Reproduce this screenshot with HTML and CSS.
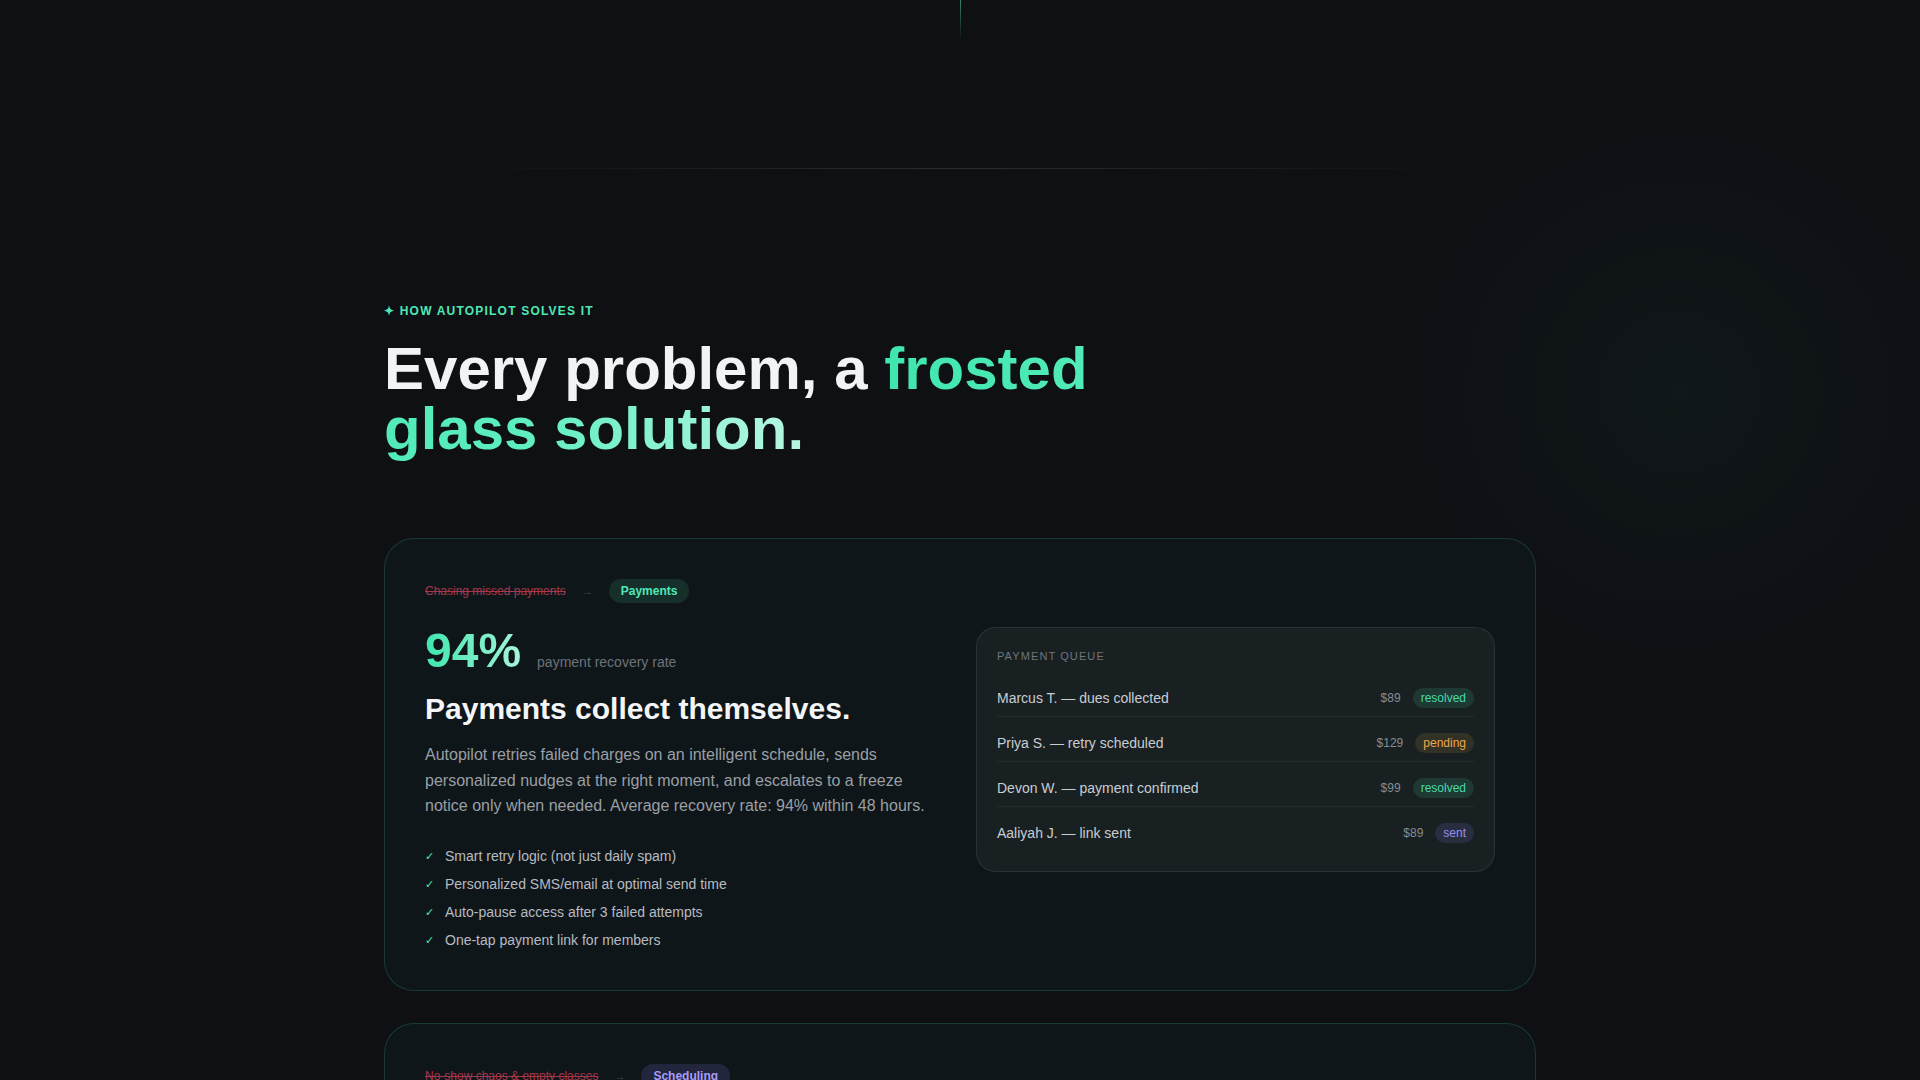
FILE: index.html
```html
<!DOCTYPE html>
<html lang="en">
<head>
  <meta charset="UTF-8">
  <title>Autopilot — How it solves it</title>
  <link rel="stylesheet" href="styles.css">
</head>
<body>
  <div class="top-line"></div>
  <div class="divider"></div>

  <section class="solutions">
    <p class="eyebrow">✦ How Autopilot solves it</p>
    <h2>Every problem, a <span class="accent">frosted glass solution.</span></h2>

    <div class="cards">
      <!-- Payments -->
      <article class="card">
        <div class="tags">
          <span class="before">Chasing missed payments</span>
          <span class="arrow">→</span>
          <span class="pill pill-green">Payments</span>
        </div>
        <div class="card-grid">
          <div class="copy">
            <div class="stat">
              <span class="stat-num">94%</span>
              <span class="stat-label">payment recovery rate</span>
            </div>
            <h3>Payments collect themselves.</h3>
            <p>Autopilot retries failed charges on an intelligent schedule, sends personalized nudges at the right moment, and escalates to a freeze notice only when needed. Average recovery rate: 94% within 48 hours.</p>
            <ul class="checks">
              <li>Smart retry logic (not just daily spam)</li>
              <li>Personalized SMS/email at optimal send time</li>
              <li>Auto-pause access after 3 failed attempts</li>
              <li>One-tap payment link for members</li>
            </ul>
          </div>
          <div class="panel">
            <div class="panel-title">Payment Queue</div>
            <div class="rows">
              <div class="row">
                <span class="row-name">Marcus T. — dues collected</span>
                <span class="row-amount">$89</span>
                <span class="status status-resolved">resolved</span>
              </div>
              <div class="row">
                <span class="row-name">Priya S. — retry scheduled</span>
                <span class="row-amount">$129</span>
                <span class="status status-pending">pending</span>
              </div>
              <div class="row">
                <span class="row-name">Devon W. — payment confirmed</span>
                <span class="row-amount">$99</span>
                <span class="status status-resolved">resolved</span>
              </div>
              <div class="row">
                <span class="row-name">Aaliyah J. — link sent</span>
                <span class="row-amount">$89</span>
                <span class="status status-sent">sent</span>
              </div>
            </div>
          </div>
        </div>
      </article>

      <!-- Scheduling -->
      <article class="card">
        <div class="tags">
          <span class="before">No-show chaos &amp; empty classes</span>
          <span class="arrow">→</span>
          <span class="pill pill-purple">Scheduling</span>
        </div>
        <div class="card-grid">
          <div class="copy">
            <div class="stat">
              <span class="stat-num">-61%</span>
              <span class="stat-label">fewer no-shows</span>
            </div>
            <h3>Classes fill themselves.</h3>
            <p>Autopilot sends smart reminders, opens waitlist spots the moment someone cancels, and nudges lapsed members back onto the schedule.</p>
            <ul class="checks">
              <li>Reminders 24h and 2h before class</li>
              <li>Automatic waitlist promotion</li>
              <li>Late-cancel policy enforced for you</li>
            </ul>
          </div>
          <div class="panel">
            <div class="panel-title">Today's Classes</div>
            <div class="rows">
              <div class="row">
                <span class="row-name">6:00 AM — Strength</span>
                <span class="row-amount">18/20</span>
                <span class="status status-resolved">filled</span>
              </div>
              <div class="row">
                <span class="row-name">12:00 PM — HIIT</span>
                <span class="row-amount">14/20</span>
                <span class="status status-pending">waitlist</span>
              </div>
            </div>
          </div>
        </div>
      </article>
    </div>
  </section>
</body>
</html>
```

FILE: styles.css
```css
body {
  margin: 0;
  font-family: 'Liberation Sans', Arial, sans-serif;
  color: #e8eaed;
  background:
    radial-gradient(circle 270px at 1678px 392px, rgba(78, 232, 181, 0.035), rgba(78, 232, 181, 0) 100%),
    #0e1014;
  min-height: 100vh;
}

/* Leftovers from the section above */
.top-line {
  width: 1px;
  height: 40px;
  margin: 0 auto;
  background: linear-gradient(180deg, rgba(78, 232, 181, 0.55), rgba(78, 232, 181, 0));
}

.divider {
  width: 1000px;
  height: 1px;
  margin: 128px auto 0;
  background: linear-gradient(90deg, rgba(255,255,255,0), rgba(255,255,255,0.12) 50%, rgba(255,255,255,0));
}

.solutions {
  max-width: 1152px;
  margin: 0 auto;
  padding: 134px 0 80px;
}

.eyebrow {
  margin: 0;
  font-size: 12px;
  line-height: 16px;
  font-weight: 700;
  letter-spacing: 0.1em;
  text-transform: uppercase;
  color: #4ee8b5;
}

.solutions h2 {
  margin: 20px 0 0;
  font-size: 60px;
  line-height: 60px;
  font-weight: 700;
  color: #f2f3f5;
  max-width: 760px;
}

.accent {
  background: linear-gradient(90deg, #3fe6ad 0%, #5eeebf 55%, #b8f7e2 100%);
  -webkit-background-clip: text;
  background-clip: text;
  color: transparent;
}

/* Cards */
.cards {
  margin-top: 79px;
  display: flex;
  flex-direction: column;
  gap: 32px;
}

.card {
  padding: 40px;
  border: 1px solid rgba(78, 232, 181, 0.17);
  border-radius: 30px;
  background: #0f1619;
}

.tags {
  display: flex;
  align-items: center;
  gap: 16px;
  margin-bottom: 24px;
  height: 24px;
}

.before {
  font-size: 12px;
  color: #a8364b;
  text-decoration: line-through;
}

.arrow {
  font-size: 11px;
  color: #3b424a;
}

.pill {
  padding: 5px 12px;
  border-radius: 999px;
  font-size: 12px;
  line-height: 14px;
  font-weight: 700;
}

.pill-green {
  background: rgba(78, 232, 181, 0.12);
  color: #4ee8b5;
}

.pill-purple {
  background: rgba(139, 124, 246, 0.16);
  color: #a99cf8;
}

.card-grid {
  display: grid;
  grid-template-columns: 1fr 1fr;
  gap: 32px;
  align-items: start;
}

.stat {
  display: flex;
  align-items: baseline;
  gap: 16px;
}

.stat-num {
  font-size: 48px;
  line-height: 48px;
  font-weight: 700;
  background: linear-gradient(90deg, #3fe6ad, #a5f5da);
  -webkit-background-clip: text;
  background-clip: text;
  color: transparent;
}

.stat-label {
  font-size: 14px;
  color: #6c7279;
}

.copy h3 {
  margin: 16px 0 0;
  font-size: 30px;
  line-height: 36px;
  font-weight: 700;
  color: #f4f5f7;
}

.copy p {
  margin: 15px 0 0;
  font-size: 16px;
  line-height: 1.6;
  color: #9a9fa6;
}

.checks {
  list-style: none;
  margin: 27px 0 0;
  padding: 0;
  display: flex;
  flex-direction: column;
  gap: 8px;
}

.checks li {
  display: flex;
  align-items: center;
  height: 20px;
  font-size: 14px;
  color: #b7bbc1;
}

.checks li::before {
  content: "✓";
  width: 20px;
  flex-shrink: 0;
  font-size: 11px;
  line-height: 20px;
  color: #4ee8b5;
}

/* Queue panel */
.panel {
  padding: 20px;
  border: 1px solid rgba(255, 255, 255, 0.08);
  border-radius: 20px;
  background: rgba(255, 255, 255, 0.045);
}

.panel-title {
  font-size: 11px;
  line-height: 16px;
  letter-spacing: 0.1em;
  text-transform: uppercase;
  color: #6f757c;
  margin-bottom: 16px;
}

.rows {
  display: flex;
  flex-direction: column;
  gap: 8px;
}

.row {
  display: flex;
  align-items: center;
  gap: 12px;
  padding: 8px 0;
  border-bottom: 1px solid rgba(255, 255, 255, 0.05);
}

.row:last-child {
  border-bottom: none;
}

.row-name {
  flex: 1;
  font-size: 14px;
  color: #c9cdd2;
}

.row-amount {
  font-size: 12px;
  color: #878c93;
}

.status {
  padding: 3px 8px;
  border-radius: 999px;
  font-size: 12px;
  line-height: 14px;
}

.status-resolved {
  background: rgba(78, 232, 181, 0.12);
  color: #45dcaa;
}

.status-pending {
  background: rgba(240, 169, 74, 0.12);
  color: #eea64b;
}

.status-sent {
  background: rgba(139, 124, 246, 0.14);
  color: #9b8df2;
}
```
